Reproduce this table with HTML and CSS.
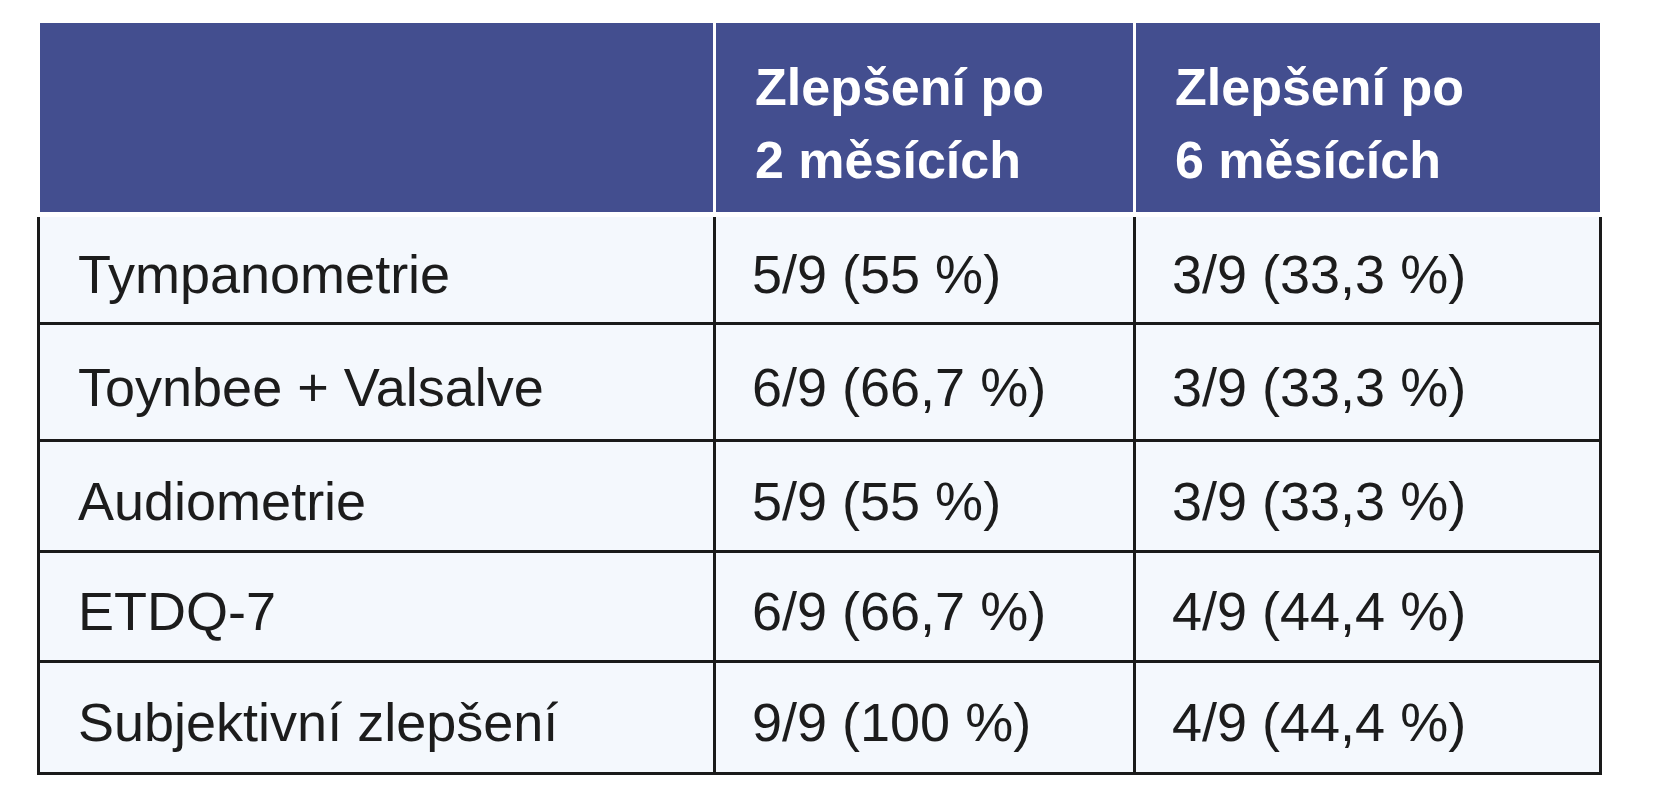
FILE: index.html
```html
<!DOCTYPE html>
<html lang="cs">
<head>
<meta charset="utf-8">
<title>Tabulka</title>
<link rel="stylesheet" href="styles.css">
</head>
<body>
<div class="wrap">
  <div class="table">
    <div class="head">
      <div class="hcell"></div>
      <div class="hcell">Zlepšení po<br>2 měsících</div>
      <div class="hcell last">Zlepšení po<br>6 měsících</div>
    </div>
    <div class="row r1">
      <div class="cell first">Tympanometrie</div>
      <div class="cell">5/9 (55 %)</div>
      <div class="cell last">3/9 (33,3 %)</div>
    </div>
    <div class="row r2">
      <div class="cell first">Toynbee + Valsalve</div>
      <div class="cell">6/9 (66,7 %)</div>
      <div class="cell last">3/9 (33,3 %)</div>
    </div>
    <div class="row r3">
      <div class="cell first">Audiometrie</div>
      <div class="cell">5/9 (55 %)</div>
      <div class="cell last">3/9 (33,3 %)</div>
    </div>
    <div class="row r4">
      <div class="cell first">ETDQ-7</div>
      <div class="cell">6/9 (66,7 %)</div>
      <div class="cell last">4/9 (44,4 %)</div>
    </div>
    <div class="row r5">
      <div class="cell first">Subjektivní zlepšení</div>
      <div class="cell">9/9 (100 %)</div>
      <div class="cell last">4/9 (44,4 %)</div>
    </div>
  </div>
</div>
</body>
</html>
```

FILE: styles.css
```css
* { box-sizing: border-box; }

html, body {
  margin: 0;
  padding: 0;
  background: #ffffff;
}

body {
  font-family: "Liberation Sans", Arial, sans-serif;
}

.wrap {
  padding: 23px 0 0 37px;
}

.table {
  width: 1565px;
}

.head,
.row {
  display: grid;
  grid-template-columns: 676px 420px 469px;
}

.head {
  height: 189px;
  margin-bottom: 5px;
}

.hcell {
  margin-left: 3px;
  background: #434e8f;
  color: #ffffff;
  font-weight: bold;
  font-size: 52px;
  line-height: 73px;
  padding: 28px 0 0 39px;
  white-space: nowrap;
}

.hcell.last {
  margin-right: 2px;
}

.cell {
  display: flex;
  align-items: center;
  background: #f4f8fd;
  color: #1c1c1c;
  font-size: 54px;
  border-left: 3px solid #1a1a1a;
  border-bottom: 3px solid #1a1a1a;
  padding: 9px 0 0 36px;
  white-space: nowrap;
}

.cell.first {
  padding-left: 38px;
}

.cell.last {
  border-right: 3px solid #1a1a1a;
}

.r1 { height: 108px; }
.r2 { height: 117px; }
.r3 { height: 111px; }
.r4 { height: 110px; }
.r5 { height: 112px; }
```
